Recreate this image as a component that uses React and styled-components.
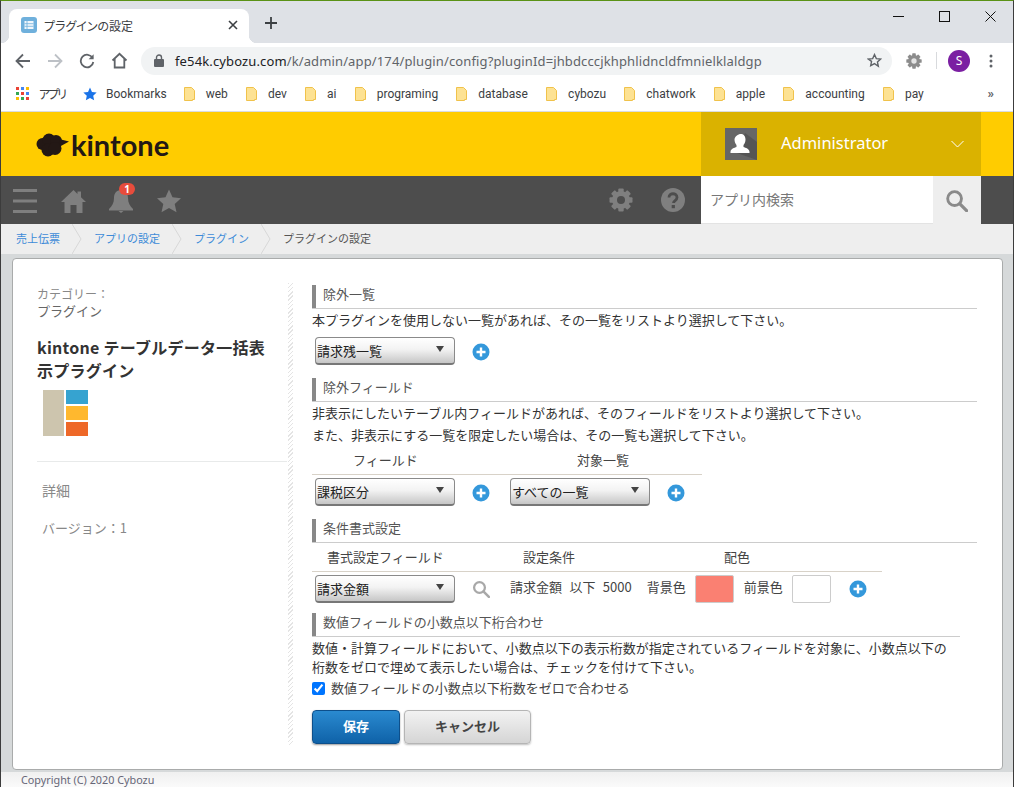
import React from "react";
import styled, { createGlobalStyle } from "styled-components";

const JP = `"Noto Sans CJK JP", "Noto Sans", sans-serif`;
const UI = `"Noto Sans", "Noto Sans CJK JP", sans-serif`;
const BM = `Roboto, "Noto Sans CJK JP", sans-serif`;

const Global = createGlobalStyle`
  html, body { margin: 0; padding: 0; background: #fff; }
  * { box-sizing: border-box; }
`;

const Frame = styled.div`
  width: 1014px; height: 787px; overflow: hidden; display: flex; flex-direction: column;
  border-left: 1px solid #3c3c3c; border-right: 1px solid #3c3c3c; border-top: 1px solid #5a9216;
  font-family: ${JP}; color: #333;
`;
const TabStrip = styled.div`
  height: 42px; flex: none; background: #dee1e6; display: flex; align-items: flex-end; padding-left: 8px; position: relative;
`;
const Tab = styled.div`
  width: 240px; height: 34px; background: #fff; border-radius: 8px 8px 0 0; display: flex; align-items: center;
  padding: 0 11px 2px 12px; font-size: 12px; color: #3c4043; position: relative;
  &::after { content: ""; position: absolute; right: -8px; bottom: 0; width: 8px; height: 8px; background: radial-gradient(circle at 100% 0, transparent 8px, #fff 8.5px); }
  &::before { content: ""; position: absolute; left: -8px; bottom: 0; width: 8px; height: 8px; background: radial-gradient(circle at 0 0, transparent 8px, #fff 8.5px); }
`;
const TabTitle = styled.span` margin-left: 7px; flex: 1; font-feature-settings: "palt"; `;
const NewTab = styled.div` width: 22px; height: 22px; margin: 0 0 9px 11px; display: flex; align-items: center; justify-content: center; `;
const WinControls = styled.div` margin-left: auto; height: 30px; align-self: flex-start; display: flex; align-items: center; `;
const WinBtn = styled.div` width: 46px; height: 29px; display: flex; align-items: center; justify-content: center; `;
const Toolbar = styled.div` height: 35px; flex: none; background: #fff; display: flex; align-items: center; padding-left: 14px; `;
const NavBtn = styled.div` width: ${p => p.$w || 32}px; display: flex; justify-content: flex-start; `;
const Omni = styled.div`
  margin-left: 12px; width: 751px; height: 28px; border-radius: 14px; background: #f1f3f4; display: flex; align-items: center;
  padding: 0 10px 0 13px; font-family: ${UI}; font-size: 13px; color: #202124;
`;
const Url = styled.span` margin-left: 11px; flex: 1; letter-spacing: 0.13px; white-space: nowrap; color: #5f6368; `;
const UrlHost = styled.span` color: #202124; `;
const ToolRight = styled.div` display: flex; align-items: center; margin-left: 14px; `;
const Divider = styled.div` width: 1px; height: 17px; background: #d8dadd; margin: 0 11px 0 14px; `;
const Avatar = styled.div`
  width: 22px; height: 22px; border-radius: 50%; background: #7b1fa2; color: #fff; font: 12px ${UI};
  display: flex; align-items: center; justify-content: center;
`;
const KebabIcon = styled.svg` margin-left: 19px; `;
const Bookmarks = styled.div`
  height: 34px; flex: none; background: #fff; border-bottom: 1px solid #dadce0; display: flex; align-items: center; padding: 0 0 2px 15px;
  font-family: ${BM}; font-size: 12px; color: #3c4043; position: relative;
`;
const Mark = styled.div` display: flex; align-items: center; gap: ${p => p.$gap || 11}px; margin-right: ${p => p.$mr ?? 18.2}px; white-space: nowrap; `;
const Palt = styled.span` font-family: ${JP}; font-size: 12px; font-feature-settings: "palt"; letter-spacing: -2px; `;
const More = styled.div` position: absolute; right: 19px; top: 8px; color: #5f6368; font-size: 13px; font-weight: 700; `;

const Header = styled.div` height: 64px; flex: none; background: #fc0; display: flex; align-items: center; padding: 0 32px 0 35px; justify-content: space-between; `;
const Logo = styled.div` display: flex; align-items: center; gap: 2px; font: 700 29px Lato, sans-serif; color: #231815; padding-top: 1px; `;
const UserBox = styled.div` width: 280px; height: 64px; background: #dab200; display: flex; align-items: center; padding-left: 24px; color: #fff; font: 16px ${UI}; position: relative; `;
const UserPic = styled.div` width: 32px; height: 32px; background: #666; display: block; `;
const UserName = styled.span` margin-left: 24px; flex: 1; font-size: 16.5px; padding-bottom: 4px; `;
const Chevron = styled.div` margin-right: 17px; display: flex; `;

const Nav = styled.div` height: 48px; flex: none; background: #4d4d4d; display: flex; align-items: center; padding-right: 32px; `;
const NavIcon = styled.div`
  width: ${p => p.$w}px; height: 48px; display: flex; align-items: center; justify-content: center; position: relative; flex: none;
  padding-top: ${p => p.$pt || 0}px; padding-right: ${p => p.$pr || 0}px;
`;
const Badge = styled.span`
  position: absolute; left: 22px; top: 7px; width: 16px; height: 12px; border-radius: 6px; background: #e74c3c; color: #fff;
  font: 700 10px/12px ${UI}; text-align: center;
`;
const Spacer = styled.div` flex: 1; `;
const SearchInput = styled.div`
  width: 232px; height: 48px; background: #fff; border-bottom: 1px solid #e3e3e3; display: flex; align-items: center; padding: 0 0 2px 9px; font-size: 14px; color: #777;
`;
const SearchBtn = styled.div` width: 48px; height: 48px; background: #eee; display: flex; align-items: center; justify-content: center; padding-right: 1px; `;

const Crumbs = styled.div` height: 30px; flex: none; background: #eee; display: flex; align-items: stretch; font-size: 11px; padding-left: 15px; `;
const Crumb = styled.div` display: flex; align-items: center; padding-bottom: 2px; color: ${p => p.$last ? "#555" : "#3d8bd8"}; `;
const CrumbArrow = styled.svg` width: 10px; height: 30px; margin: 0 12px; flex: none; `;

const Stage = styled.div` flex: 1; min-height: 0; background: #d6d9da; padding: 4px 10px 2px 11px; display: flex; `;
const Card = styled.div`
  flex: 1; background: #fff; border: 1px solid #a9abab; border-radius: 4px; display: flex; padding: 24px 25px 24px 24px;
`;
const Side = styled.div`
  width: 256px; flex: none; padding-right: 6px; background: repeating-linear-gradient(135deg, #e4e4e4 0 1px, #fff 1px 3px) right top / 5px 100% no-repeat;
`;
const SideInner = styled.div` width: 250px; `;
const CatLabel = styled.div` font-size: 12px; line-height: 17px; color: #888; margin-top: 2px; `;
const CatName = styled.div` font-size: 13px; line-height: 18px; color: #666; `;
const Title = styled.div` font-size: 16px; font-weight: 700; line-height: 23px; color: #333; margin-top: 16px; width: 236px; letter-spacing: 0.25px; `;
const PluginIcon = styled.div` margin: 8px 0 0 6px; width: 45px; height: 46px; display: grid; grid-template-columns: 21px 22px; grid-template-rows: 14px 14px 14px; gap: 2px; `;
const Tile = styled.div` background: ${p => p.$c}; grid-row: ${p => p.$span ? "1 / span 3" : "auto"}; `;
const SideRule = styled.div` border-top: 1px solid #e8eaea; margin-top: 25px; `;
const Detail = styled.div` font-size: 14px; line-height: 20px; color: #888; margin: 18px 0 0 5px; `;
const Version = styled.div` font-size: 13px; line-height: 19px; color: #888; margin: 18px 0 0 5px; `;

const Body = styled.div` flex: 1; padding-left: 19px; margin-top: 2px; `;
const Heading = styled.div`
  height: 24px; border-bottom: 1px solid #ccc; width: ${p => p.$w || 665}px; margin-top: ${p => p.$mt || 0}px; position: relative;
  padding-left: 11px; font-size: 13px; line-height: 18px; color: #555;
  &::before { content: ""; position: absolute; left: 0; top: 0; bottom: 0; width: 4px; background: #888; }
`;
const Para = styled.div` font-size: 13px; line-height: ${p => p.$lh || 22}px; color: #333; white-space: nowrap; margin-top: ${p => p.$mt || 0}px; `;
const Row = styled.div` display: flex; align-items: center; height: 28px; margin-top: ${p => p.$mt ?? 3}px; padding-left: 3px; `;
const SelectBox = styled.div`
  width: 140px; height: 28px; border: 1px solid #8a8a8a; border-bottom: 2px solid #777; border-radius: 4px; flex: none;
  margin-left: ${p => p.$ml || 0}px;
  background: linear-gradient(#fff, #f3f3f3 45%, #c6c6c6); font-size: 13px; color: #222; padding-left: 1px; line-height: 25px; position: relative;
  &::after { content: ""; position: absolute; right: 10px; top: 8px; border: 4px solid transparent; border-top: 6px solid #444; border-bottom: 0; }
`;
const PlusWrap = styled.div` width: 18px; height: 18px; margin: ${p => p.$mt || 0}px 0 0 ${p => p.$ml}px; flex: none; display: flex; `;
const ColHead = styled.div`
  display: flex; width: ${p => p.$w}px; height: 29px; border-bottom: 1px solid #d8d2c8; font-size: 13px; line-height: 28px; color: #444;
`;
const Col = styled.div` width: ${p => p.$w}px; padding-left: ${p => p.$pl || 0}px; flex: none; `;
const CondText = styled.span` font-size: 13px; color: #444; white-space: pre; word-spacing: 4.5px; margin-left: ${p => p.$ml}px; padding-bottom: 5px; `;
const Swatch = styled.div` width: 39px; height: 28px; border: 1px solid #ccc; border-radius: 2px; background: ${p => p.$c}; margin-left: 9px; flex: none; `;
const CheckRow = styled.label` display: flex; align-items: center; font-size: 13px; color: #444; line-height: 20px; margin-top: 2px; `;
const Check = styled.input` width: 13px; height: 13px; margin: 0 6px 0 0; accent-color: #0075ff; `;
const Buttons = styled.div` display: flex; gap: 4px; margin-top: 12px; `;
const PrimaryBtn = styled.button`
  width: 88px; height: 34px; border: 1px solid #0d4f8b; border-radius: 4px; background: linear-gradient(#2a8ad0, #0f62a8);
  color: #fff; font: 700 13px ${JP}; box-shadow: 0 1px 2px rgba(0,0,0,.4); padding: 0 0 3px;
`;
const GhostBtn = styled.button`
  width: 127px; height: 34px; border: 1px solid #b5b5b5; border-radius: 4px; background: linear-gradient(#f2f2f2, #d5d5d5);
  color: #444; font: 700 13px ${JP}; box-shadow: 0 1px 2px rgba(0,0,0,.25); padding: 0 0 3px;
`;
const Footer = styled.div` height: 15px; flex: none; background: linear-gradient(#f0f0f0, #fafafa); padding-left: 20px; font: 10.8px/16px ${UI}; color: #667; `;

const Plus = () => (
  <svg width="18" height="18" viewBox="0 0 18 18">
    <circle cx="9" cy="9" r="8.5" fill="#3498db" />
    <path d="M9 4.5v9M4.5 9h9" stroke="#fff" strokeWidth="2.4" />
  </svg>
);
const Folder = () => (
  <svg width="11" height="14" viewBox="0 0 11 14">
    <path d="M.5.5h7l3 3v9h-2v1H.5z" fill="#fde293" stroke="#f0c24b" />
  </svg>
);
const MagGlass = ({ c = "#8a8a8a", s = 24 }) => (
  <svg width={s} height={s} viewBox="0 0 24 24">
    <circle cx="10" cy="10" r="7.2" fill="none" stroke={c} strokeWidth="3" />
    <path d="M15.5 15.5l7 7" stroke={c} strokeWidth="3.4" strokeLinecap="round" />
  </svg>
);
const Gear = ({ c, s, hole }) => (
  <svg width={s} height={s} viewBox="0 0 24 24">
    {[0, 45, 90, 135].map(a => <rect key={a} x="9.3" y="0.5" width="5.4" height="23" rx="1" fill={c} transform={`rotate(${a} 12 12)`} />)}
    <circle cx="12" cy="12" r="9" fill={c} />
    <circle cx="12" cy="12" r="4" fill={hole} />
  </svg>
);
const Arrow = () => (
  <CrumbArrow viewBox="0 0 10 30"><path d="M0 0l9 15L0 30" fill="none" stroke="#d8d8d8" /></CrumbArrow>
);

const bookmarks = ["web", "dev", "ai", "programing", "database", "cybozu", "chatwork", "apple", "accounting", "pay"];
const appsColors = ["#ea4335", "#4285f4", "#fbbc04", "#34a853", "#ea4335", "#4285f4", "#fbbc04", "#34a853", "#ea4335"];

export default function App() {
  return (
    <>
      <Global />
      <Frame>
        <TabStrip>
          <Tab>
            <svg width="16" height="16" viewBox="0 0 16 16">
              <rect width="16" height="16" rx="3" fill="#6fb0dc" />
              <rect x="3.5" y="4" width="9" height="8" fill="#fff" opacity=".9" />
              <path d="M3.5 6.7h9M3.5 9.3h9M6 4v8" stroke="#6fb0dc" strokeWidth=".8" />
            </svg>
            <TabTitle>プラグインの設定</TabTitle>
            <svg width="10" height="10" viewBox="0 0 10 10"><path d="M1 1l8 8M9 1l-8 8" stroke="#3c4043" strokeWidth="1.6" /></svg>
          </Tab>
          <NewTab>
            <svg width="14" height="14" viewBox="0 0 14 14"><path d="M7 1v12M1 7h12" stroke="#3c4043" strokeWidth="1.8" /></svg>
          </NewTab>
          <WinControls>
            <WinBtn><svg width="11" height="11" viewBox="0 0 11 11"><path d="M0 5.5h11" stroke="#111" /></svg></WinBtn>
            <WinBtn><svg width="11" height="11" viewBox="0 0 11 11"><rect x=".5" y=".5" width="10" height="10" fill="none" stroke="#111" /></svg></WinBtn>
            <WinBtn><svg width="11" height="11" viewBox="0 0 11 11"><path d="M.5.5l10 10M10.5.5l-10 10" stroke="#111" /></svg></WinBtn>
          </WinControls>
        </TabStrip>
        <Toolbar>
          <NavBtn><svg width="16" height="16" viewBox="0 0 16 16"><path d="M15 8H2M8 1.5L1.5 8 8 14.5" fill="none" stroke="#5f6368" strokeWidth="1.8" /></svg></NavBtn>
          <NavBtn><svg width="16" height="16" viewBox="0 0 16 16"><path d="M1 8h13M8 1.5L14.5 8 8 14.5" fill="none" stroke="#bdc1c6" strokeWidth="1.8" /></svg></NavBtn>
          <NavBtn><svg width="16" height="16" viewBox="0 0 16 16"><path d="M13.6 5A6.3 6.3 0 1 0 14.3 9" fill="none" stroke="#5f6368" strokeWidth="1.8" /><path d="M14.6 1.2v5h-5z" fill="#5f6368" /></svg></NavBtn>
          <NavBtn $w={18}><svg width="17" height="17" viewBox="0 0 17 17"><path d="M1.5 8.5L8.5 1.8l7 6.7M3.7 7v8.5h9.6V7" fill="none" stroke="#5f6368" strokeWidth="1.8" /></svg></NavBtn>
          <Omni>
            <svg width="10" height="13" viewBox="0 0 10 13"><rect y="5" width="10" height="8" rx="1" fill="#5f6368" /><path d="M2.5 5.5V3.5a2.5 2.5 0 0 1 5 0v2" fill="none" stroke="#5f6368" strokeWidth="1.4" /></svg>
            <Url><UrlHost>fe54k.cybozu.com</UrlHost>/k/admin/app/174/plugin/config?pluginId=jhbdcccjkhphlidncldfmnielklaldgp</Url>
            <svg width="15" height="15" viewBox="0 0 24 24"><path d="M12 2.5l2.9 6.4 7 .8-5.2 4.7 1.4 6.9L12 17l-6.1 3.3 1.4-6.9L2.1 9.700l7-.8z" fill="none" stroke="#5f6368" strokeWidth="2.2" /></svg>
          </Omni>
          <ToolRight>
            <Gear c="#8c8c8c" s={16} hole="#e4e4e4" />
            <Divider />
            <Avatar>S</Avatar>
            <KebabIcon width="4" height="14" viewBox="0 0 4 14"><circle cx="2" cy="2" r="1.5" fill="#5f6368" /><circle cx="2" cy="7" r="1.5" fill="#5f6368" /><circle cx="2" cy="12" r="1.5" fill="#5f6368" /></KebabIcon>
          </ToolRight>
        </Toolbar>
        <Bookmarks>
          <Mark $gap={10} $mr={18}>
            <svg width="13" height="13" viewBox="0 0 13 13">
              {appsColors.map((c, i) => <rect key={i} x={(i % 3) * 5} y={Math.floor(i / 3) * 5} width="3" height="3" fill={c} />)}
            </svg>
            <Palt>アプリ</Palt>
          </Mark>
          <Mark $gap={9} $mr={17}>
            <svg width="14" height="14" viewBox="0 0 24 24"><path d="M12 1l3.4 7.400 8 .9-5.900 5.500 1.600 7.900L12 18.700l-7.100 4 1.600-7.900L.6 9.300l8-.9z" fill="#1a73e8" /></svg>
            <span>Bookmarks</span>
          </Mark>
          {bookmarks.map(b => <Mark key={b}><Folder /><span>{b}</span></Mark>)}
          <More>»</More>
        </Bookmarks>
        <Header>
          <Logo>
            <svg width="33" height="24" viewBox="0 0 33 24" fill="#231815">
              <circle cx="6.500" cy="11" r="6" />
              <circle cx="13" cy="7" r="6.500" />
              <circle cx="20" cy="8" r="6" />
              <circle cx="12" cy="17" r="6.500" />
              <circle cx="19" cy="15.500" r="6.500" />
              <path d="M23 6l10 2.500-9 5z" />
            </svg>
            kintone
          </Logo>
          <UserBox>
            <UserPic>
              <svg width="32" height="32" viewBox="0 0 32 32">
                <path d="M12 25L32 32V14L20 5z" fill="#555" />
                <path d="M16 6c3 0 4.500 2.500 4.500 5.500 0 2.500-1 4.500-2 5.500v2c2 1 6 1.500 6 5v1H5.500v-1c0-3.500 4-4 6-5v-2c-1-1-2-3-2-5.500C9.500 8.500 13 6 16 6z" fill="#fff" />
              </svg>
            </UserPic>
            <UserName>Administrator</UserName>
            <Chevron><svg width="13" height="8" viewBox="0 0 13 8"><path d="M.5 1l6 6 6-6" fill="none" stroke="#fff" strokeWidth="1" /></svg></Chevron>
          </UserBox>
        </Header>
        <Nav>
          <NavIcon $w={48} $pt={2}>
            <svg width="24" height="24" viewBox="0 0 24 24"><path d="M0 1.500h24M0 12h24M0 22.500h24" stroke="#7f7f7f" strokeWidth="3" /></svg>
          </NavIcon>
          <NavIcon $w={48} $pt={2}>
            <svg width="25" height="25" viewBox="0 0 25 25"><path d="M12.500 1L16.500 4.900V2.500H20V8.200L25 13H21.500V24H15.500V16H9.500V24H3.500V13H0z" fill="#7f7f7f" /></svg>
          </NavIcon>
          <NavIcon $w={48} $pt={2}>
            <svg width="24" height="24" viewBox="0 0 24 24"><path d="M12 1c5 0 7 4 7 8 0 5 2 8 5 11v1.500H0V20c3-3 5-6 5-11 0-4 2-8 7-8z" fill="#7f7f7f" /><path d="M9.500 22h5L12 24z" fill="#7f7f7f" /></svg>
            <Badge>1</Badge>
          </NavIcon>
          <NavIcon $w={48} $pt={2}>
            <svg width="24" height="24" viewBox="0 0 24 24"><path d="M12 .5l3.500 7.800 8.500.9-6.300 5.700 1.800 8.400L12 18.900l-7.500 4.400 1.800-8.400L0 9.200l8.500-.9z" fill="#7f7f7f" /></svg>
          </NavIcon>
          <Spacer />
          <NavIcon $w={52} $pr={4}><Gear c="#7f7f7f" s={24} hole="#4d4d4d" /></NavIcon>
          <NavIcon $w={52} $pr={4}>
            <svg width="24" height="24" viewBox="0 0 24 24"><circle cx="12" cy="12" r="12" fill="#7f7f7f" /><path d="M8 9.500c0-5 8-5 8 0 0 3-3.500 3-3.500 5.500" fill="none" stroke="#4d4d4d" strokeWidth="2.800" /><rect x="10.700" y="17" width="3.200" height="3.200" fill="#4d4d4d" /></svg>
          </NavIcon>
          <SearchInput>アプリ内検索</SearchInput>
          <SearchBtn><MagGlass s={23} /></SearchBtn>
        </Nav>
        <Crumbs>
          <Crumb>売上伝票</Crumb>
          <Arrow />
          <Crumb>アプリの設定</Crumb>
          <Arrow />
          <Crumb>プラグイン</Crumb>
          <Arrow />
          <Crumb $last>プラグインの設定</Crumb>
        </Crumbs>
        <Stage>
          <Card>
            <Side>
              <SideInner>
                <CatLabel>カテゴリー：</CatLabel>
                <CatName>プラグイン</CatName>
                <Title>kintone テーブルデータ一括表示プラグイン</Title>
                <PluginIcon>
                  <Tile $span $c="#cdc5ae" />
                  <Tile $c="#36a3d0" />
                  <Tile $c="#ffb82e" />
                  <Tile $c="#ee6828" />
                </PluginIcon>
                <SideRule />
                <Detail>詳細</Detail>
                <Version>バージョン：1</Version>
              </SideInner>
            </Side>
            <Body>
              <Heading>除外一覧</Heading>
              <Para>本プラグインを使用しない一覧があれば、その一覧をリストより選択して下さい。</Para>
              <Row $mt={6}><SelectBox>請求残一覧</SelectBox><PlusWrap $ml={17} $mt={2}><Plus /></PlusWrap></Row>
              <Heading $mt={13}>除外フィールド</Heading>
              <Para>非表示にしたいテーブル内フィールドがあれば、そのフィールドをリストより選択して下さい。</Para>
              <Para>また、非表示にする一覧を限定したい場合は、その一覧も選択して下さい。</Para>
              <ColHead $w={390}><Col $w={198} $pl={41}>フィールド</Col><Col $w={192} $pl={67}>対象一覧</Col></ColHead>
              <Row>
                <SelectBox>課税区分</SelectBox><PlusWrap $ml={17} $mt={2}><Plus /></PlusWrap>
                <SelectBox $ml={20}>すべての一覧</SelectBox><PlusWrap $ml={17} $mt={2}><Plus /></PlusWrap>
              </Row>
              <Heading $mt={13}>条件書式設定</Heading>
              <ColHead $w={570}><Col $w={211} $pl={15}>書式設定フィールド</Col><Col $w={201}>設定条件</Col><Col $w={100}>配色</Col></ColHead>
              <Row>
                <SelectBox>請求金額</SelectBox>
                <PlusWrap $ml={17}><MagGlass c="#a8a8a8" s={18} /></PlusWrap>
                <CondText $ml={20}>請求金額 以下 5000</CondText>
                <CondText $ml={15}>背景色</CondText>
                <Swatch $c="#fa8072" />
                <CondText $ml={10}>前景色</CondText>
                <Swatch $c="#fff" />
                <PlusWrap $ml={18}><Plus /></PlusWrap>
              </Row>
              <Heading $mt={10} $w={648}>数値フィールドの小数点以下桁合わせ</Heading>
              <Para $lh={19} $mt={1}>数値・計算フィールドにおいて、小数点以下の表示桁数が指定されているフィールドを対象に、小数点以下の</Para>
              <Para $lh={19}>桁数をゼロで埋めて表示したい場合は、チェックを付けて下さい。</Para>
              <CheckRow><Check type="checkbox" defaultChecked />数値フィールドの小数点以下桁数をゼロで合わせる</CheckRow>
              <Buttons>
                <PrimaryBtn>保存</PrimaryBtn>
                <GhostBtn>キャンセル</GhostBtn>
              </Buttons>
            </Body>
          </Card>
        </Stage>
        <Footer>Copyright (C) 2020 Cybozu</Footer>
      </Frame>
    </>
  );
}
